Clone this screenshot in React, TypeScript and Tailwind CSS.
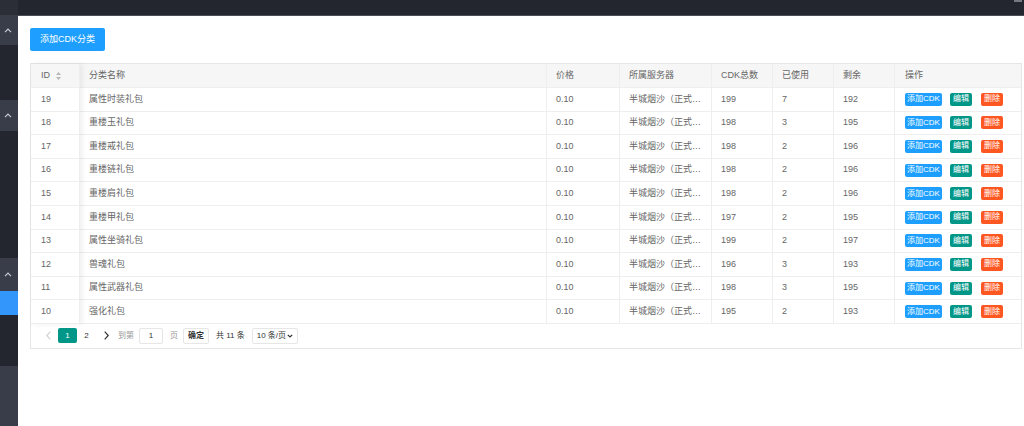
import type { ReactNode } from 'react'

type Row = {
  id: number
  name: string
  total: number
  used: number
  left: number
}

const rows: Row[] = [
  { id: 19, name: '属性时装礼包', total: 199, used: 7, left: 192 },
  { id: 18, name: '重楼玉礼包', total: 198, used: 3, left: 195 },
  { id: 17, name: '重楼戒礼包', total: 198, used: 2, left: 196 },
  { id: 16, name: '重楼链礼包', total: 198, used: 2, left: 196 },
  { id: 15, name: '重楼肩礼包', total: 198, used: 2, left: 196 },
  { id: 14, name: '重楼甲礼包', total: 197, used: 2, left: 195 },
  { id: 13, name: '属性坐骑礼包', total: 199, used: 2, left: 197 },
  { id: 12, name: '兽魂礼包', total: 196, used: 3, left: 193 },
  { id: 11, name: '属性武器礼包', total: 198, used: 3, left: 195 },
  { id: 10, name: '强化礼包', total: 195, used: 2, left: 193 },
]

const gridCols = 'grid grid-cols-[49px_467px_73px_92px_61px_61px_61px_1fr]'

function Chevron() {
  return (
    <svg width="8" height="5" viewBox="0 0 8 5" className="ml-[4px]">
      <polyline points="1,4.2 4,1.2 7,4.2" fill="none" stroke="#c9cbd0" strokeWidth="1.2" />
    </svg>
  )
}

function Sidebar() {
  return (
    <aside className="flex w-[18px] shrink-0 flex-col bg-[#23262e]">
      <div className="h-[15px] bg-[#2b2e36]" />
      <div className="flex h-[30px] items-center bg-[#393d49]">
        <Chevron />
      </div>
      <div className="h-[55px]" />
      <div className="flex h-[31px] items-center bg-[#393d49]">
        <Chevron />
      </div>
      <div className="h-[127px]" />
      <div className="flex h-[33px] items-center bg-[#393d49]">
        <Chevron />
      </div>
      <div className="h-[24px] bg-[#3296fa]" />
      <div className="h-[51px]" />
      <div className="flex-1 bg-[#393d49]" />
    </aside>
  )
}

function Cell({ children, last, className = '' }: { children: ReactNode; last?: boolean; className?: string }) {
  return (
    <div
      className={`flex min-w-0 items-center whitespace-nowrap px-[9px] ${last ? '' : 'border-r border-[#eeeeee]'} ${className}`}
    >
      {children}
    </div>
  )
}

function SortIcon() {
  return (
    <svg width="5" height="8" viewBox="0 0 5 8" className="ml-[6px]">
      <polygon points="2.5,0 5,3 0,3" fill="#b8b8b8" />
      <polygon points="0,5 5,5 2.5,8" fill="#b8b8b8" />
    </svg>
  )
}

function PageArrow({ dir, color }: { dir: 'left' | 'right'; color: string }) {
  return (
    <span className="flex w-[20px] justify-center">
      <svg width="5" height="9" viewBox="0 0 5 9">
        <polyline
          points={dir === 'left' ? '4.3,0.7 0.8,4.5 4.3,8.3' : '0.7,0.7 4.2,4.5 0.7,8.3'}
          fill="none"
          stroke={color}
          strokeWidth="1.2"
        />
      </svg>
    </span>
  )
}

export default function App() {
  return (
    <div className="flex h-[426px] w-[1024px] overflow-hidden bg-white font-['Liberation_Sans','Noto_Sans_CJK_SC',sans-serif] text-[#666]">
      <Sidebar />
      <main className="flex min-w-0 flex-1 flex-col">
        <header className="flex h-[16px] shrink-0 justify-end border-b border-[#4a4d55] bg-[#23262e]">
          <span className="mr-[2px] h-[2px] w-[8px] bg-[#767980]" />
        </header>

        <div className="pl-[12px] pr-[2px] pt-[12px]">
          <button className="block h-[23px] w-[75px] rounded-[2px] bg-[#1e9fff] text-[9px] text-white">
            添加CDK分类
          </button>

          <div className="mt-[12px] border border-[#e6e6e6] text-[9px]">
            <div className="relative">
              <div className={`${gridCols} h-[24px] border-b border-[#eeeeee] bg-[#f6f6f6]`}>
                <Cell className="pl-[10px]">
                  ID
                  <SortIcon />
                </Cell>
                <Cell>分类名称</Cell>
                <Cell>价格</Cell>
                <Cell>所属服务器</Cell>
                <Cell>CDK总数</Cell>
                <Cell>已使用</Cell>
                <Cell>剩余</Cell>
                <Cell last className="pl-[10px]">操作</Cell>
              </div>

              {rows.map((row) => (
                <div key={row.id} className={`${gridCols} h-[23.6px] border-b border-[#eeeeee]`}>
                  <Cell className="pl-[10px]">{row.id}</Cell>
                  <Cell>{row.name}</Cell>
                  <Cell>0.10</Cell>
                  <Cell>半城烟沙（正式…</Cell>
                  <Cell>{row.total}</Cell>
                  <Cell>{row.used}</Cell>
                  <Cell>{row.left}</Cell>
                  <Cell last className="pl-[10px] text-[8px] text-white">
                    <span className="flex h-[13px] w-[37px] items-center justify-center rounded-[2px] bg-[#1e9fff]">
                      添加CDK
                    </span>
                    <span className="ml-[8px] flex h-[13px] w-[22px] items-center justify-center rounded-[2px] bg-[#009688]">
                      编辑
                    </span>
                    <span className="ml-[9px] flex h-[13px] w-[22px] items-center justify-center rounded-[2px] bg-[#ff5722]">
                      删除
                    </span>
                  </Cell>
                </div>
              ))}

              <div className="pointer-events-none absolute bottom-0 left-0 top-0 w-[49px] shadow-[2px_0_5px_rgba(0,0,0,0.07)]" />
            </div>

            <div className="flex h-[24px] items-center whitespace-nowrap pl-[7px] text-[8px] text-[#333]">
              <PageArrow dir="left" color="#d2d2d2" />
              <span className="flex h-[15px] w-[19px] items-center justify-center rounded-[2px] bg-[#009688] text-white">
                1
              </span>
              <span className="flex w-[19px] justify-center">2</span>
              <PageArrow dir="right" color="#333" />
              <span className="ml-[2px] text-[#999]">到第</span>
              <span className="ml-[5px] flex h-[16px] w-[24px] items-center justify-center rounded-[2px] border border-[#e6e6e6]">
                1
              </span>
              <span className="ml-[7px] text-[#999]">页</span>
              <span className="ml-[5px] flex h-[16px] w-[26px] items-center justify-center rounded-[2px] border border-[#e6e6e6] font-bold">
                确定
              </span>
              <span className="ml-[7px]">共 11 条</span>
              <span className="ml-[7px] flex h-[16px] w-[46px] items-center justify-between rounded-[2px] border border-[#e6e6e6] px-[4px]">
                10 条/页
                <svg width="6" height="4" viewBox="0 0 6 4">
                  <polyline points="0.8,0.8 3,3 5.2,0.8" fill="none" stroke="#333" strokeWidth="1.2" />
                </svg>
              </span>
            </div>
          </div>
        </div>
      </main>
    </div>
  )
}
